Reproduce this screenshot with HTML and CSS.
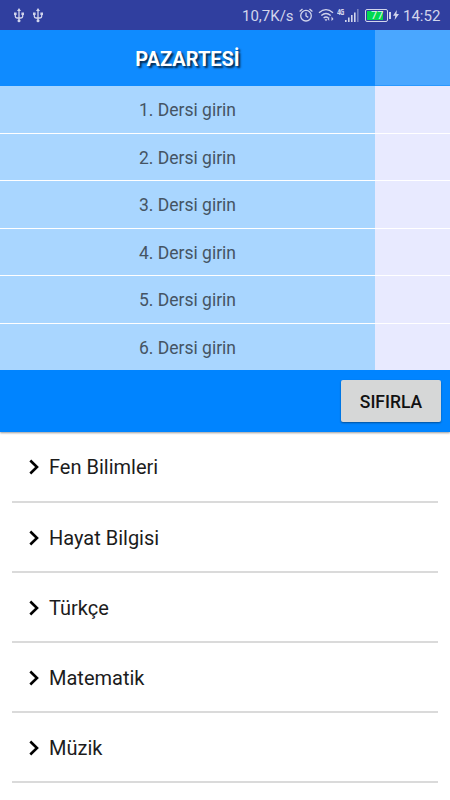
FILE: index.html
```html
<!DOCTYPE html>
<html lang="tr">
<head>
    <meta charset="UTF-8">
    <meta name="viewport" content="width=device-width, initial-scale=1.0">
    <title>Ders Programı</title>
    <link rel="stylesheet" href="styles.css">
</head>
<body>
    <header class="status-bar">
        <div class="status-left">
            <svg class="usb" viewBox="0 0 10 15"><path d="M5 2v11M1.300 5v3.300q0 1.700 1.700 1.700h4q1.700 0 1.700-1.700V5"/><path class="fill" d="M5 0l2 3H3zM0 4.500h2.600v2.500H0zM7.400 4.500H10v2.500H7.400z"/><circle class="fill" cx="5" cy="12.800" r="1.500"/></svg>
            <svg class="usb" viewBox="0 0 10 15"><path d="M5 2v11M1.300 5v3.300q0 1.700 1.700 1.700h4q1.700 0 1.700-1.700V5"/><path class="fill" d="M5 0l2 3H3zM0 4.500h2.600v2.500H0zM7.400 4.500H10v2.500H7.400z"/><circle class="fill" cx="5" cy="12.800" r="1.500"/></svg>
        </div>
        <div class="status-right">
            <span class="speed">10,7K/s</span>
            <svg class="alarm" viewBox="0 0 14 14"><circle cx="7" cy="7.700" r="5.300"/><path d="M7 4.500v3.500l2.300 1.400M.6 3.400L3.500 1M13.400 3.400L10.500 1"/></svg>
            <svg class="wifi" viewBox="0 0 17 14"><path d="M1 4.700q7-6 14 0M3.300 7.500q4.700-4 9.400 0M5.600 10q2.400-2 4.800 0"/><path class="fill" d="M6.500 11.200h3L8 13.200zM11.200 8.500v4.500l-1.500-2zM13.500 8.500v4.500l2-2z"/></svg>
            <div class="mobile">
                <span class="net">4G</span>
                <svg class="signal" viewBox="0 0 14 14"><path class="fill" d="M0 12h1.600v2H0zM3 9.500h1.600V14H3zM6 7h1.600v7H6zM9 4.500h1.600V14H9z"/><path class="dim" d="M12 1h1.600v13H12z"/></svg>
            </div>
            <div class="battery"><span class="level">77</span></div>
            <svg class="bolt" viewBox="0 0 6 10"><path class="fill" d="M3.800 0L0 5.800h2.300L1.600 10 6 4.100H3.500z"/></svg>
            <span class="clock">14:52</span>
        </div>
    </header>

    <section class="schedule">
        <div class="day">
            <h1 class="day-title">PAZARTESİ</h1>
            <div class="lesson">1. Dersi girin</div>
            <div class="lesson">2. Dersi girin</div>
            <div class="lesson">3. Dersi girin</div>
            <div class="lesson">4. Dersi girin</div>
            <div class="lesson">5. Dersi girin</div>
            <div class="lesson">6. Dersi girin</div>
        </div>
        <div class="day next-day">
            <div class="day-title"></div>
            <div class="lesson"></div>
            <div class="lesson"></div>
            <div class="lesson"></div>
            <div class="lesson"></div>
            <div class="lesson"></div>
            <div class="lesson"></div>
        </div>
    </section>

    <div class="toolbar">
        <button class="reset">SIFIRLA</button>
    </div>

    <ul class="subjects">
        <li><svg class="arrow" viewBox="0 0 10 16"><path d="M1.300 1.500L8 8l-6.700 6.500"/></svg>Fen Bilimleri</li>
        <li><svg class="arrow" viewBox="0 0 10 16"><path d="M1.300 1.500L8 8l-6.700 6.500"/></svg>Hayat Bilgisi</li>
        <li><svg class="arrow" viewBox="0 0 10 16"><path d="M1.300 1.500L8 8l-6.700 6.500"/></svg>Türkçe</li>
        <li><svg class="arrow" viewBox="0 0 10 16"><path d="M1.300 1.500L8 8l-6.700 6.500"/></svg>Matematik</li>
        <li><svg class="arrow" viewBox="0 0 10 16"><path d="M1.300 1.500L8 8l-6.700 6.500"/></svg>Müzik</li>
    </ul>
</body>
</html>
```

FILE: styles.css
```css
* {
    box-sizing: border-box;
}

body {
    margin: 0;
    height: 100vh;
    overflow: hidden;
    background: #fff;
    font-family: Roboto, sans-serif;
    color: #1c1c1c;
}

/* Status bar */
.status-bar {
    height: 30px;
    padding: 0 10px 0 14px;
    display: flex;
    justify-content: space-between;
    align-items: center;
    background: #303f9f;
    color: #d2d5ec;
}

.status-bar svg {
    fill: none;
    stroke: #d2d5ec;
    stroke-width: 1.3;
    flex-shrink: 0;
}

.status-bar svg .fill {
    fill: #d2d5ec;
    stroke: none;
}

.status-bar svg .dim {
    fill: #7580bf;
    stroke: none;
}

.status-left {
    display: flex;
    gap: 9px;
}

.usb {
    width: 10px;
    height: 15px;
}

.status-right {
    display: flex;
    align-items: center;
    font-size: 15px;
    line-height: 30px;
}

.speed {
    width: 51px;
    margin-right: 6px;
    white-space: nowrap;
    padding-top: 1px;
}

.alarm {
    width: 14px;
    height: 14px;
    margin-right: 5px;
}

.wifi {
    width: 17px;
    height: 14px;
    margin-right: 2px;
}

.mobile {
    display: flex;
    width: 22px;
    margin-right: 6px;
}

.net {
    width: 8px;
    font-family: "Open Sans", sans-serif;
    font-size: 8px;
    font-weight: 700;
    line-height: 8px;
    letter-spacing: -1px;
    transform: scaleX(0.8);
    transform-origin: left;
}

.signal {
    width: 14px;
    height: 14px;
}

.battery {
    position: relative;
    width: 23px;
    height: 13px;
    padding: 1px;
    margin-right: 5px;
    border: 1px solid #d2d5ec;
    border-radius: 2px;
}

.battery::after {
    content: '';
    position: absolute;
    right: -4px;
    top: 2px;
    width: 2px;
    height: 7px;
    background: #d2d5ec;
}

.level {
    display: block;
    width: 16px;
    height: 9px;
    padding-left: 4px;
    background: #00d84f;
    color: #e8f5ee;
    font-size: 11px;
    line-height: 10px;
}

.bolt {
    width: 6px;
    height: 12px;
    margin-right: 4px;
}

.clock {
    width: 37px;
    padding-top: 1px;
    white-space: nowrap;
}

/* Schedule */
.schedule {
    height: 340px;
    display: flex;
    overflow: hidden;
}

.day {
    width: 375px;
    flex-shrink: 0;
    background: #a9d6ff;
}

.day-title {
    height: 56px;
    margin: 0;
    padding-top: 1px;
    background: #0f8bff;
    color: #fff;
    font-size: 20px;
    font-weight: 700;
    line-height: 56px;
    text-align: center;
    text-shadow: 2px 2px 2px rgba(0, 0, 0, 0.7);
}

.lesson {
    height: 47.5px;
    border-bottom: 1px solid #fff;
    color: #455463;
    font-size: 17.5px;
    line-height: 49px;
    text-align: center;
}

.lesson:last-child {
    border-bottom: none;
}

.next-day {
    background: #e8eaff;
}

.next-day .day-title {
    background: #4aa7ff;
    border-bottom: 1px solid #2a99ff;
}

/* Toolbar */
.toolbar {
    height: 62px;
    padding: 10px 9px 0 0;
    display: flex;
    justify-content: flex-end;
    align-items: flex-start;
    background: #0084ff;
    box-shadow: 0 1px 2px rgba(0, 0, 0, 0.4);
}

.reset {
    width: 100px;
    height: 42px;
    padding: 2px 0 0;
    border: none;
    border-radius: 2px;
    background: #d6d7d7;
    box-shadow: 0 1px 2px rgba(0, 0, 0, 0.4);
    color: #111;
    font-family: Roboto, sans-serif;
    font-size: 17.5px;
    font-weight: 500;
}

/* Subject list */
.subjects {
    list-style: none;
    margin: 0;
    padding: 0 12px;
}

.subjects li {
    height: 70px;
    padding: 1px 0 0 17px;
    display: flex;
    align-items: center;
    border-bottom: 2px solid #dadada;
    font-size: 20px;
}

.subjects li:first-child {
    height: 71px;
}

.arrow {
    width: 10px;
    height: 16px;
    margin-right: 10px;
    fill: none;
    stroke: #000;
    stroke-width: 2.6;
}
```
